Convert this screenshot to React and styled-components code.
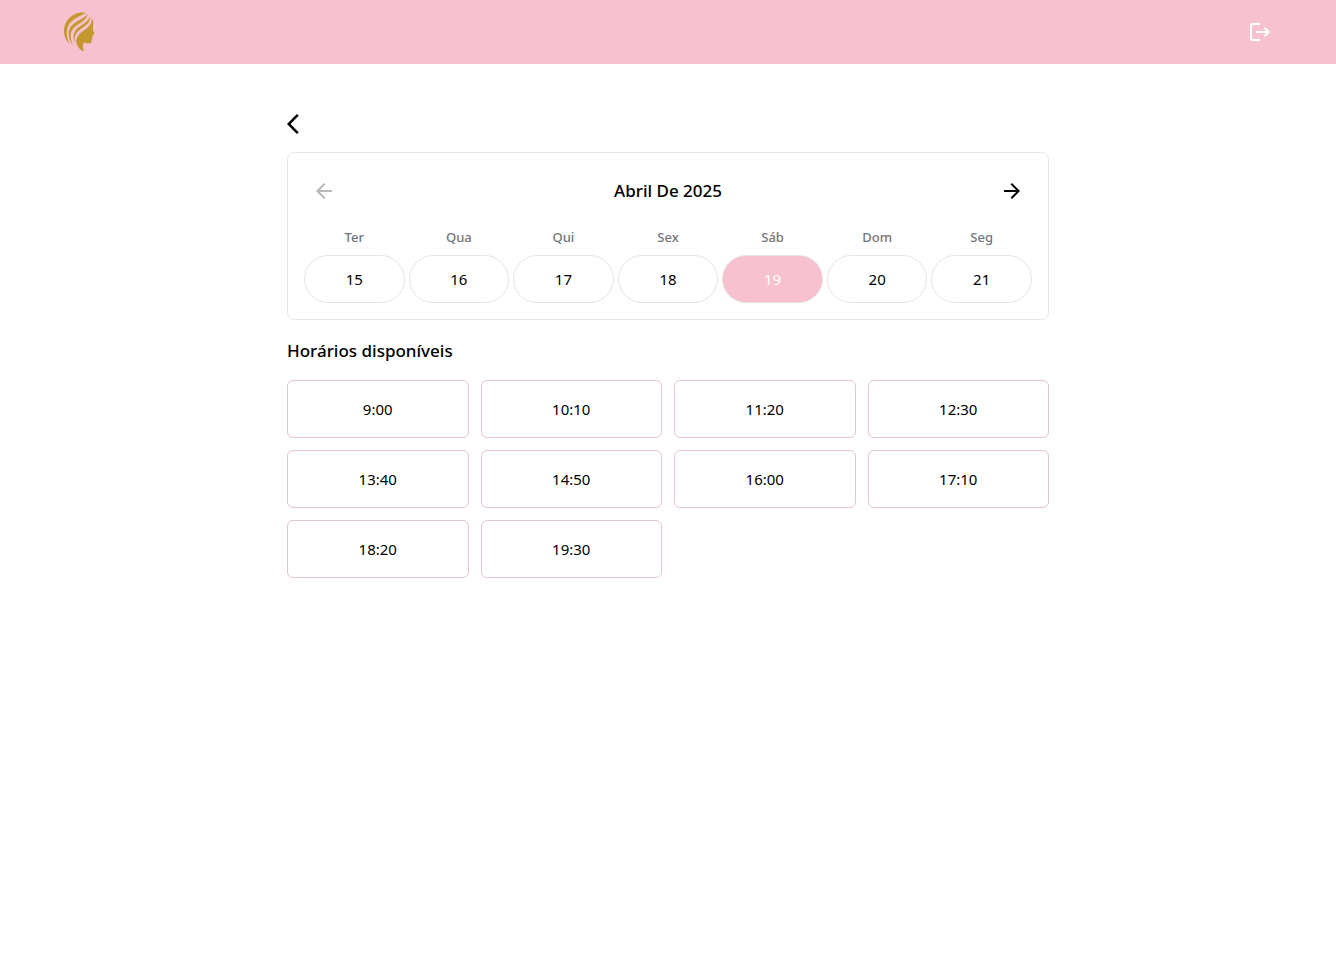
import React, { useState } from "react";
import styled, { createGlobalStyle } from "styled-components";
import { MdLogout, MdArrowBack, MdArrowForward, MdArrowBackIos } from "react-icons/md";

const GlobalStyle = createGlobalStyle`
  *, *::before, *::after { box-sizing: border-box; }
  body {
    margin: 0;
    background: #fff;
    color: #000;
    font-family: "Segoe UI", "Noto Sans", "Open Sans", sans-serif;
    font-size: 15px;
    line-height: 24px;
  }
  button {
    font: inherit;
    color: inherit;
    background: none;
    border: 0;
    padding: 0;
    cursor: pointer;
  }
  svg { display: block; }
`;

const Header = styled.header`
  display: flex;
  align-items: center;
  justify-content: space-between;
  height: 64px;
  padding: 0 64px;
  background: #f7c1d0;
`;

const HomeLink = styled.a`
  display: block;
`;

const LogoutButton = styled.button`
  color: #fff;
`;

const Main = styled.main`
  max-width: 762px;
  margin: 0 auto;
  padding: 48px 0;
`;

const BackButton = styled.button`
  display: block;
  margin-bottom: 16px;
`;

const Card = styled.section`
  padding: 16px;
  border: 1px solid #e5e5e5;
  border-radius: 8px;
`;

const MonthBar = styled.div`
  display: flex;
  align-items: center;
  justify-content: space-between;
  height: 44px;
  margin-bottom: 14px;
`;

const MonthTitle = styled.h1`
  margin: 0;
  font-size: 17px;
  font-weight: 500;
  line-height: 30px;
`;

const ArrowButton = styled.button`
  padding: 8px;
  &:disabled {
    color: #b8b8b8;
    cursor: default;
  }
`;

const Week = styled.div`
  display: grid;
  grid-template-columns: repeat(7, 1fr);
  gap: 4px;
`;

const Day = styled.div`
  display: flex;
  flex-direction: column;
  gap: 8px;
`;

const DayName = styled.span`
  color: #70757d;
  font-size: 13px;
  font-weight: 500;
  line-height: 20px;
  text-align: center;
`;

const DayButton = styled.button`
  height: 48px;
  border: 1px solid #e5e5e5;
  border-radius: 24px;
  background: ${(p) => (p.$selected ? "#f7c1d0" : "#fff")};
  color: ${(p) => (p.$selected ? "#fff" : "#000")};
`;

const SlotsTitle = styled.h2`
  margin: 16px 0 14px;
  font-size: 17px;
  font-weight: 500;
  line-height: 30px;
`;

const Slots = styled.div`
  display: grid;
  grid-template-columns: repeat(4, 1fr);
  gap: 12px;
`;

const SlotButton = styled.button`
  height: 58px;
  border: 1px solid #e6c5d0;
  border-radius: 6px;
`;

const days = [
  ["Ter", 15],
  ["Qua", 16],
  ["Qui", 17],
  ["Sex", 18],
  ["Sáb", 19],
  ["Dom", 20],
  ["Seg", 21],
];

const times = ["9:00", "10:10", "11:20", "12:30", "13:40", "14:50", "16:00", "17:10", "18:20", "19:30"];

function Logo() {
  return (
    <svg width="32" height="40" viewBox="0 0 96 120" fill="#c4982f" aria-hidden="true">
      <path d="M66 3C38 -5 0 18 0 58C0 74 7 88 17 96C8 79 5 58 13 41C23 21 46 14 66 3Z" />
      <path d="M72 5C58 22 32 27 20 45C9 62 14 84 27 99C19 79 17 63 27 50C41 33 66 29 72 5Z" />
      <path d="M79 11C75 31 48 38 36 53C27 65 27 80 33 92C31 79 32 68 42 58C57 43 80 37 79 11Z" />
      <path d="M83 18C86 42 63 51 51 62C38 73 34 86 39 99C44 109 51 116 61 118C55 109 55 99 61 91C64 94 69 95 77 94C83 93 83 90 82 86L85 82L83 79L86 75C86 72 84 71 86 69C91 68 92 65 90 62C87 56 86 52 87 46C89 35 88 26 83 18Z" />
    </svg>
  );
}

export default function App() {
  const [selected, setSelected] = useState(19);
  return (
    <>
      <GlobalStyle />
      <Header>
        <HomeLink href="#" aria-label="Início">
          <Logo />
        </HomeLink>
        <LogoutButton type="button" aria-label="Sair">
          <MdLogout size={24} />
        </LogoutButton>
      </Header>
      <Main>
        <BackButton type="button" aria-label="Voltar">
          <MdArrowBackIos size={24} />
        </BackButton>
        <Card>
          <MonthBar>
            <ArrowButton type="button" aria-label="Semana anterior" disabled>
              <MdArrowBack size={24} />
            </ArrowButton>
            <MonthTitle>Abril De 2025</MonthTitle>
            <ArrowButton type="button" aria-label="Próxima semana">
              <MdArrowForward size={24} />
            </ArrowButton>
          </MonthBar>
          <Week>
            {days.map(([name, number]) => (
              <Day key={number}>
                <DayName id={`dia-${number}`}>{name}</DayName>
                <DayButton
                  type="button"
                  aria-describedby={`dia-${number}`}
                  aria-pressed={selected === number}
                  $selected={selected === number}
                  onClick={() => setSelected(number)}
                >
                  {number}
                </DayButton>
              </Day>
            ))}
          </Week>
        </Card>
        <SlotsTitle>Horários disponíveis</SlotsTitle>
        <Slots>
          {times.map((time) => (
            <SlotButton type="button" key={time}>
              {time}
            </SlotButton>
          ))}
        </Slots>
      </Main>
    </>
  );
}
